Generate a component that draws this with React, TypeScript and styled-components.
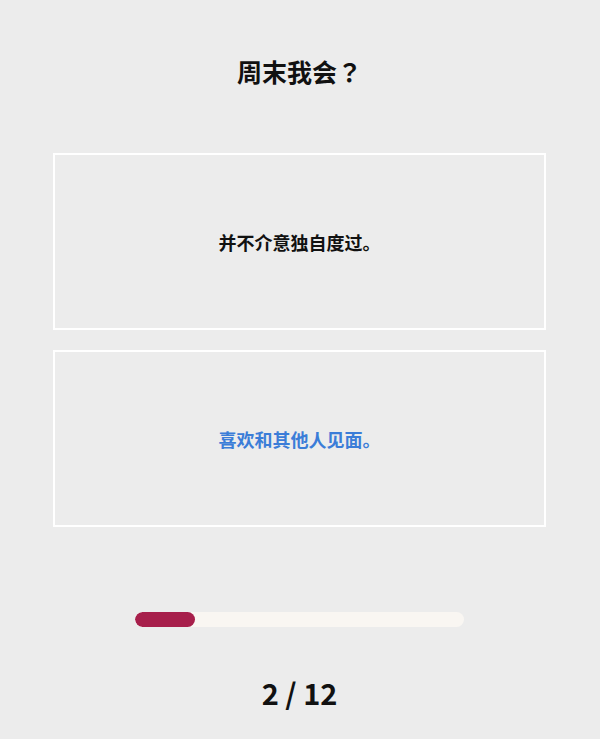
import React from "react";
import styled, { createGlobalStyle } from "styled-components";

const GlobalStyle = createGlobalStyle`
  html, body {
    margin: 0;
    padding: 0;
    background: #ececec;
  }
  body {
    font-family: "Noto Sans CJK SC", "Noto Sans", sans-serif;
    color: #111;
  }
`;

const Page = styled.main`
  width: 600px;
  min-height: 739px;
  box-sizing: border-box;
  padding: 53px 54px 0 53px;
  display: flex;
  flex-direction: column;
  align-items: center;
`;

const Question = styled.h1`
  margin: 0 0 64px;
  font-size: 25px;
  line-height: 36px;
  font-weight: 700;
  text-align: center;
`;

/* full-width question mark drawn centred in its cell */
const Mark = styled.span`
  font-family: "Noto Sans CJK TC", "Noto Sans CJK SC", sans-serif;
`;

const Options = styled.div`
  width: 100%;
  display: flex;
  flex-direction: column;
  gap: 20px;
`;

const Option = styled.button<{ $active?: boolean }>`
  height: 177px;
  width: 100%;
  box-sizing: border-box;
  border: 2px solid #ffffff;
  background: transparent;
  display: flex;
  align-items: center;
  justify-content: center;
  font-family: inherit;
  font-size: 18px;
  font-weight: 700;
  color: ${(p) => (p.$active ? "#3b7dd8" : "#111")};
  cursor: pointer;
  padding: 0;
`;

const Track = styled.div`
  margin-top: 85px;
  width: 329px;
  height: 15px;
  border-radius: 8px;
  background: #f9f6f2;
  overflow: hidden;
`;

const Fill = styled.div`
  height: 100%;
  border-radius: 8px;
  background: #a71f4b;
`;

const Counter = styled.div`
  margin-top: 44px;
  font-size: 29px;
  line-height: 42px;
  font-weight: 700;
  text-align: center;
`;

const answers = [
  { text: "并不介意独自度过。", active: false },
  { text: "喜欢和其他人见面。", active: true },
];

export default function App() {
  const step = 2;
  const total = 12;
  const pct = 60 / 329;
  return (
    <>
      <GlobalStyle />
      <Page>
        <Question>
          周末我会<Mark>？</Mark>
        </Question>
        <Options>
          {answers.map((a) => (
            <Option key={a.text} $active={a.active}>
              {a.text}
            </Option>
          ))}
        </Options>
        <Track>
          <Fill style={{ width: `${pct * 100}%` }} />
        </Track>
        <Counter>
          {step} / {total}
        </Counter>
      </Page>
    </>
  );
}
